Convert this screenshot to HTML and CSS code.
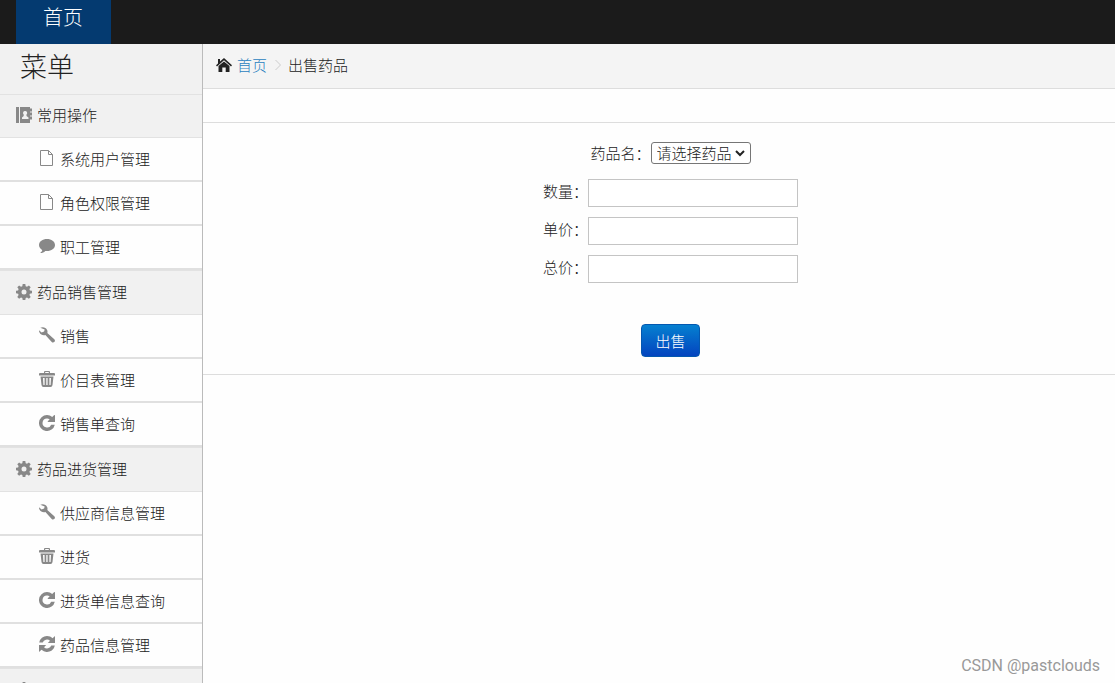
FILE: index.html
```
<!DOCTYPE html>
<html lang="zh-CN">
<head>
<meta charset="utf-8">
<title>出售药品</title>
<link rel="stylesheet" href="styles.css">
</head>
<body>
<svg class="sprite" aria-hidden="true">
  <symbol id="book" viewBox="0 0 16 16"><path fill-rule="evenodd" d="M0 0h3v16H0zM4 0h10v1.500h2v3h-2v1h2v3h-2v1h2v3h-2V16H4zM9 4a2 2 0 0 0-1.300 3.500V9L6 10.500V12h6.500v-1.500L10.500 9V7.500A2 2 0 0 0 9 4z"/></symbol>
  <symbol id="file" viewBox="0 0 16 16"><path fill="none" stroke="currentColor" d="M1.500.500h8l4 4v11h-12zM9.500.500v4h4"/></symbol>
  <symbol id="comment" viewBox="0 0 16 16"><path d="M8 1c4.400 0 8 2.500 8 6s-3.600 6-8 6c-.6 0-1.200 0-1.700-.1C5 14.300 3.300 15 1.500 15v-.5c1-.6 1.700-1.500 1.700-2.500C1.300 10.900 0 9.100 0 7c0-3.500 3.600-6 8-6z"/></symbol>
  <symbol id="cog" viewBox="0 0 16 16"><path fill-rule="evenodd" d="M6.700 0h2.600l.4 2.200 1.300.5 1.900-1.300 1.800 1.800-1.300 1.900.5 1.300 2.100.3v2.600l-2.100.4-.5 1.300 1.300 1.900-1.800 1.800-1.900-1.300-1.300.5-.4 2.100H6.700l-.4-2.100-1.300-.5-1.900 1.300-1.800-1.800 1.300-1.900-.5-1.300L0 9.300V6.700l2.100-.3.500-1.300-1.300-1.900 1.800-1.800L5 2.700l1.300-.5zM8 5.500a2.500 2.500 0 1 0 0 5 2.500 2.500 0 0 0 0-5z"/></symbol>
  <symbol id="wrench" viewBox="0 0 16 16"><path d="M1.300.8C3.800-.5 7 .4 8.100 3c.5 1 .5 2 .2 3l7 6.300c.8.700.9 1.700.2 2.500l-.3.300c-.8.700-1.800.600-2.500-.2L6.400 8C4.100 8.700 1.600 7.800.500 5.600.1 4.800 0 4 0 3.200l2.600 2.200 2.500-.8.600-2.200z"/></symbol>
  <symbol id="trash" viewBox="0 0 16 16"><path fill-rule="evenodd" d="M5 2V1q0-1 1-1h4q1 0 1 1v1h4q1 0 1 1v1.500H0V3q0-1 1-1zm1.200 0h3.600v-.9H6.200zM1.500 5.500h13L13.500 14q-.2 2-2 2h-7q-1.800 0-2-2zM4 7l.4 7h1.200V7zm3.300 0v7h1.300V7zM10.400 7v7h1.200L12 7z"/></symbol>
  <symbol id="repeat" viewBox="0 0 16 16"><path d="M8 0c2 0 3.800.8 5.200 2L15 .3c.6-.5 1-.3 1 .4v6.300H9.300c-.7 0-.9-.4-.4-.9l1.800-1.700A4.300 4.300 0 0 0 8 3.500a4.500 4.500 0 1 0 4.200 6.200h3.600A8 8 0 1 1 8 0z"/></symbol>
  <symbol id="refresh" viewBox="0 0 16 16"><path d="M8 0c2.200 0 4.100.8 5.500 2.200L16 0v7H8.800l2.200-2.200A4.500 4.500 0 0 0 3.700 6.500H.2A8 8 0 0 1 8 0zM0 9h7.200L5 11.200a4.500 4.500 0 0 0 7.300-1.700h3.500A8 8 0 0 1 2.500 13.800L0 16z"/></symbol>
  <symbol id="home" viewBox="0 0 16 16"><path d="M8 1l8 7.200-1 1.200L8 3.200 1 9.400 0 8.200l2-1.800V2h2v2.600zM8 4.400l5.500 4.700V15H9.700v-4.500H6.300V15H2.500V9.100z"/></symbol>
</svg>
<header class="topbar"><a class="topbar-link" href="#">首页</a></header>
<div class="layout">
  <nav class="sidebar">
    <h1 class="sidebar-title">菜单</h1>
    <a class="group" href="#"><svg class="icon"><use href="#book"/></svg>常用操作</a>
    <a class="item" href="#"><svg class="icon"><use href="#file"/></svg>系统用户管理</a>
    <a class="item" href="#"><svg class="icon"><use href="#file"/></svg>角色权限管理</a>
    <a class="item" href="#"><svg class="icon"><use href="#comment"/></svg>职工管理</a>
    <a class="group" href="#"><svg class="icon"><use href="#cog"/></svg>药品销售管理</a>
    <a class="item" href="#"><svg class="icon"><use href="#wrench"/></svg>销售</a>
    <a class="item" href="#"><svg class="icon"><use href="#trash"/></svg>价目表管理</a>
    <a class="item" href="#"><svg class="icon"><use href="#repeat"/></svg>销售单查询</a>
    <a class="group" href="#"><svg class="icon"><use href="#cog"/></svg>药品进货管理</a>
    <a class="item" href="#"><svg class="icon"><use href="#wrench"/></svg>供应商信息管理</a>
    <a class="item" href="#"><svg class="icon"><use href="#trash"/></svg>进货</a>
    <a class="item" href="#"><svg class="icon"><use href="#repeat"/></svg>进货单信息查询</a>
    <a class="item" href="#"><svg class="icon"><use href="#refresh"/></svg>药品信息管理</a>
    <a class="group" href="#"><svg class="icon"><use href="#cog"/></svg>药品库存管理</a>
  </nav>
  <main class="content">
    <div class="breadcrumb">
      <svg class="icon"><use href="#home"/></svg>
      <a class="breadcrumb-link" href="#">首页</a>
      <svg class="chevron" viewBox="0 0 6 12"><path d="M.5 1l5 5-5 5"/></svg>
      <span>出售药品</span>
    </div>
    <div class="strip"></div>
    <form class="form">
      <div class="row row-select">
        <label for="drug">药品名：</label>
        <span class="select-wrap">
          <select id="drug" class="select"><option>请选择药品</option></select>
          <svg class="select-arrow" viewBox="0 0 10 7"><path d="M1 1l4 4 4-4"/></svg>
        </span>
      </div>
      <div class="row"><label for="count">数量：</label><input id="count" class="field" type="text"></div>
      <div class="row"><label for="price">单价：</label><input id="price" class="field" type="text"></div>
      <div class="row"><label for="total">总价：</label><input id="total" class="field" type="text"></div>
      <button class="submit" type="button">出售</button>
    </form>
  </main>
</div>
<div class="watermark">CSDN @pastclouds</div>
</body>
</html>
```
FILE: styles.css
```
* { box-sizing: border-box; }
body {
  margin: 0;
  height: 100vh;
  overflow: hidden;
  display: flex;
  flex-direction: column;
  background: #fefefe;
  color: #222;
  font: 300 15px/20px "Noto Sans CJK SC", sans-serif;
}
a { color: inherit; text-decoration: none; }
.sprite { display: none; }
.icon { width: 16px; height: 16px; flex: none; fill: currentColor; }
.topbar { flex: none; display: flex; height: 44px; padding-left: 16px; background: #1b1b1b; }
.topbar-link {
  padding: 2px 28px 0 27px;
  background: #043a70;
  color: #fff;
  font-size: 20px;
  line-height: 30px;
}
.layout { flex: 1; min-height: 0; display: flex; }
.sidebar { width: 203px; flex: none; overflow: hidden; border-right: 1px solid #bbb; }
.sidebar-title {
  margin: 0;
  height: 50px;
  padding-left: 20px;
  background: #f1f1f1;
  font-size: 27px;
  font-weight: 300;
  line-height: 44px;
}
.group, .item { display: flex; align-items: center; }
.group {
  height: 45px;
  gap: 5px;
  padding: 0 0 2px 16px;
  background: #f1f1f1;
  border-top: 1px solid #e2e2e2;
  border-bottom: 1px solid #e2e2e2;
}
.sidebar-title + .group { height: 44px; }
.item { height: 44px; gap: 5px; padding-left: 39px; border-bottom: 2px solid #e0e0e0; }
.group .icon, .item .icon { color: #888; }
.item .icon { margin-bottom: 2px; }
.content { flex: 1; min-width: 0; }
.breadcrumb {
  display: flex;
  align-items: center;
  height: 45px;
  padding: 0 13px 2px;
  gap: 5px;
  background: #f4f4f4;
  border-bottom: 1px solid #ddd;
}
.breadcrumb-link { color: #2a7fbf; }
.chevron { width: 6px; height: 12px; margin: 0 2px 0 3px; fill: none; stroke: #ccc; }
.strip { height: 34px; border-bottom: 1px solid #ddd; }
.form {
  display: flex;
  flex-direction: column;
  align-items: center;
  gap: 10px;
  padding: 18px 0 17px 23px;
  border-bottom: 1px solid #ddd;
}
.row { display: flex; align-items: center; height: 28px; }
.row label { margin-bottom: 4px; }
.row-select { padding-bottom: 4px; }
.row-select label { margin-bottom: 0; }
.select-wrap { display: flex; position: relative; }
.select {
  appearance: none;
  height: 22px;
  width: 100px;
  padding: 0 0 0 5px;
  border: 1px solid #767676;
  border-radius: 3px;
  background: #fff;
  color: #222;
  font: inherit;
}
.select-arrow {
  position: absolute;
  right: 6px;
  top: 8px;
  width: 10px;
  height: 7px;
  fill: none;
  stroke: #222;
  stroke-width: 2;
  pointer-events: none;
}
.field { width: 210px; height: 28px; border: 1px solid #c4c4c4; background: #fff; font: inherit; }
.submit {
  height: 33px;
  margin-top: 31px;
  padding: 0 13px;
  border: 1px solid #0458b0;
  border-radius: 4px;
  background: linear-gradient(#0580d0, #0444bf);
  color: #fff;
  font: inherit;
}
.watermark {
  position: absolute;
  right: 15px;
  bottom: 7px;
  color: #999;
  font: 16px/20px Roboto, sans-serif;
}
```
